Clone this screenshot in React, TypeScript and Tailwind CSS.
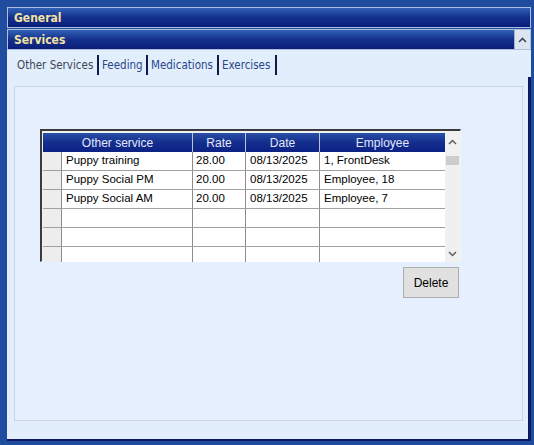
import React from "react";

const rows = [
  ["Puppy training", "28.00", "08/13/2025", "1, FrontDesk"],
  ["Puppy Social PM", "20.00", "08/13/2025", "Employee, 18"],
  ["Puppy Social AM", "20.00", "08/13/2025", "Employee, 7"],
  ["", "", "", ""],
  ["", "", "", ""],
  ["", "", "", ""],
];

const tabFont = { fontFamily: '"DejaVu Sans Condensed", "Liberation Sans", sans-serif' };

function Bar({ title, button }: { title: string; button?: boolean }) {
  return (
    <div className="h-[21px] flex items-stretch border border-[#aebfe0] bg-gradient-to-b from-[#3161b6] via-[#14308c] to-[#0a1d7a]">
      <div
        className="flex-1 flex items-center pl-[6px] text-[12px] font-bold text-[#f3e2a2]"
        style={tabFont}
      >
        {title}
      </div>
      {button && (
        <div className="w-[16px] bg-[#dde6f0] border-l border-[#9fb2cc] flex items-center justify-center">
          <svg width="9" height="6" viewBox="0 0 9 6">
            <path d="M1 5 L4.5 1.5 L8 5" fill="none" stroke="#404a58" strokeWidth="1.6" />
          </svg>
        </div>
      )}
    </div>
  );
}

function Tab({ label, w, selected }: { label: string; w: number; selected?: boolean }) {
  return (
    <>
      <div
        className={`h-[23px] flex items-end pb-[3px] pl-[3px] text-[11.5px] leading-[14px] ${selected ? "text-[#3b4656]" : "text-[#27468a]"}`}
        style={{ ...tabFont, width: w }}
      >
        {label}
      </div>
      <div className="w-[2px] h-[20px] mt-[3px] bg-[#0d1c4a]" />
    </>
  );
}

export default function App() {
  const cellFont = { fontFamily: '"Liberation Sans", Arial, sans-serif' };
  return (
    <div className="w-[534px] h-[445px] bg-[#1f4c9e] pt-[7px] pl-[7px] pr-[3px] pb-[4px] flex flex-col">
      <Bar title="General" />
      <div className="h-[1px]" />
      <Bar title="Services" button />
      <div className="flex-1 flex flex-col bg-[#e3eefc]">
        <div className="h-[27px] flex items-start pt-[2px] pl-[7px]">
          <Tab label="Other Services" w={83} selected />
          <Tab label="Feeding" w={47} />
          <Tab label="Medications" w={69} />
          <Tab label="Exercises" w={56} />
        </div>
        <div className="flex-1 flex flex-col border-r-[3px] border-b-[2px] border-[#0b1a62] pl-[7px] pt-[9px] pr-[5px] pb-[18px]">
          <div className="flex-1 border border-[#cbd5e2] bg-[#e5effd] pl-[25px] pt-[42px]">
            <div className="w-[421px] flex flex-col">
              <div className="h-[133px] border-t-2 border-l-2 border-[#3a3a3a] border-r border-b border-r-[#f4f4f4] border-b-[#f4f4f4] bg-[#f0f0f0] pt-[2px] pl-[1px] flex">
                <div className="w-[402px] h-[129px] overflow-hidden bg-white" style={cellFont}>
                  <div className="h-[19px] flex bg-gradient-to-b from-[#2a4fa6] via-[#142e8e] to-[#0b2184] text-[12px] text-[#e2e8fa]">
                    <div className="w-[150px] flex items-center justify-center border-r border-[#b9c4dc]">Other service</div>
                    <div className="w-[53px] flex items-center justify-center border-r border-[#b9c4dc]">Rate</div>
                    <div className="w-[74px] flex items-center justify-center border-r border-[#b9c4dc]">Date</div>
                    <div className="w-[125px] flex items-center justify-center">Employee</div>
                  </div>
                  {rows.map((r, i) => (
                    <div key={i} className="h-[19px] flex border-b border-[#a0a0a0] text-[11.5px] text-black">
                      <div className="w-[19px] bg-[#ededed] border-r border-[#8c8c8c]" />
                      <div className="w-[131px] flex items-center pl-[4px] border-r border-[#8c8c8c]">{r[0]}</div>
                      <div className="w-[53px] flex items-center pl-[3px] border-r border-[#8c8c8c]">{r[1]}</div>
                      <div className="w-[74px] flex items-center pl-[4px] border-r border-[#8c8c8c]">{r[2]}</div>
                      <div className="w-[125px] flex items-center pl-[4px]">{r[3]}</div>
                    </div>
                  ))}
                </div>
                <div className="w-[15px] h-[129px] bg-[#f0f0f0] flex flex-col items-center">
                  <div className="h-[17px] w-full flex items-center justify-center">
                    <svg width="9" height="6" viewBox="0 0 9 6">
                      <path d="M1 5 L4.5 1.5 L8 5" fill="none" stroke="#606060" strokeWidth="1.5" />
                    </svg>
                  </div>
                  <div className="w-[13px] h-[9px] mt-[6px] bg-[#cdcdcd]" />
                  <div className="flex-1" />
                  <div className="h-[17px] w-full flex items-center justify-center">
                    <svg width="9" height="6" viewBox="0 0 9 6">
                      <path d="M1 1 L4.5 4.5 L8 1" fill="none" stroke="#606060" strokeWidth="1.5" />
                    </svg>
                  </div>
                </div>
              </div>
              <div className="self-end mr-[2px] mt-[5px] w-[56px] h-[31px] bg-[#e1e1e1] border border-[#adadad] flex items-center justify-center text-[12px] text-black" style={cellFont}>
                Delete
              </div>
            </div>
          </div>
        </div>
      </div>
    </div>
  );
}
